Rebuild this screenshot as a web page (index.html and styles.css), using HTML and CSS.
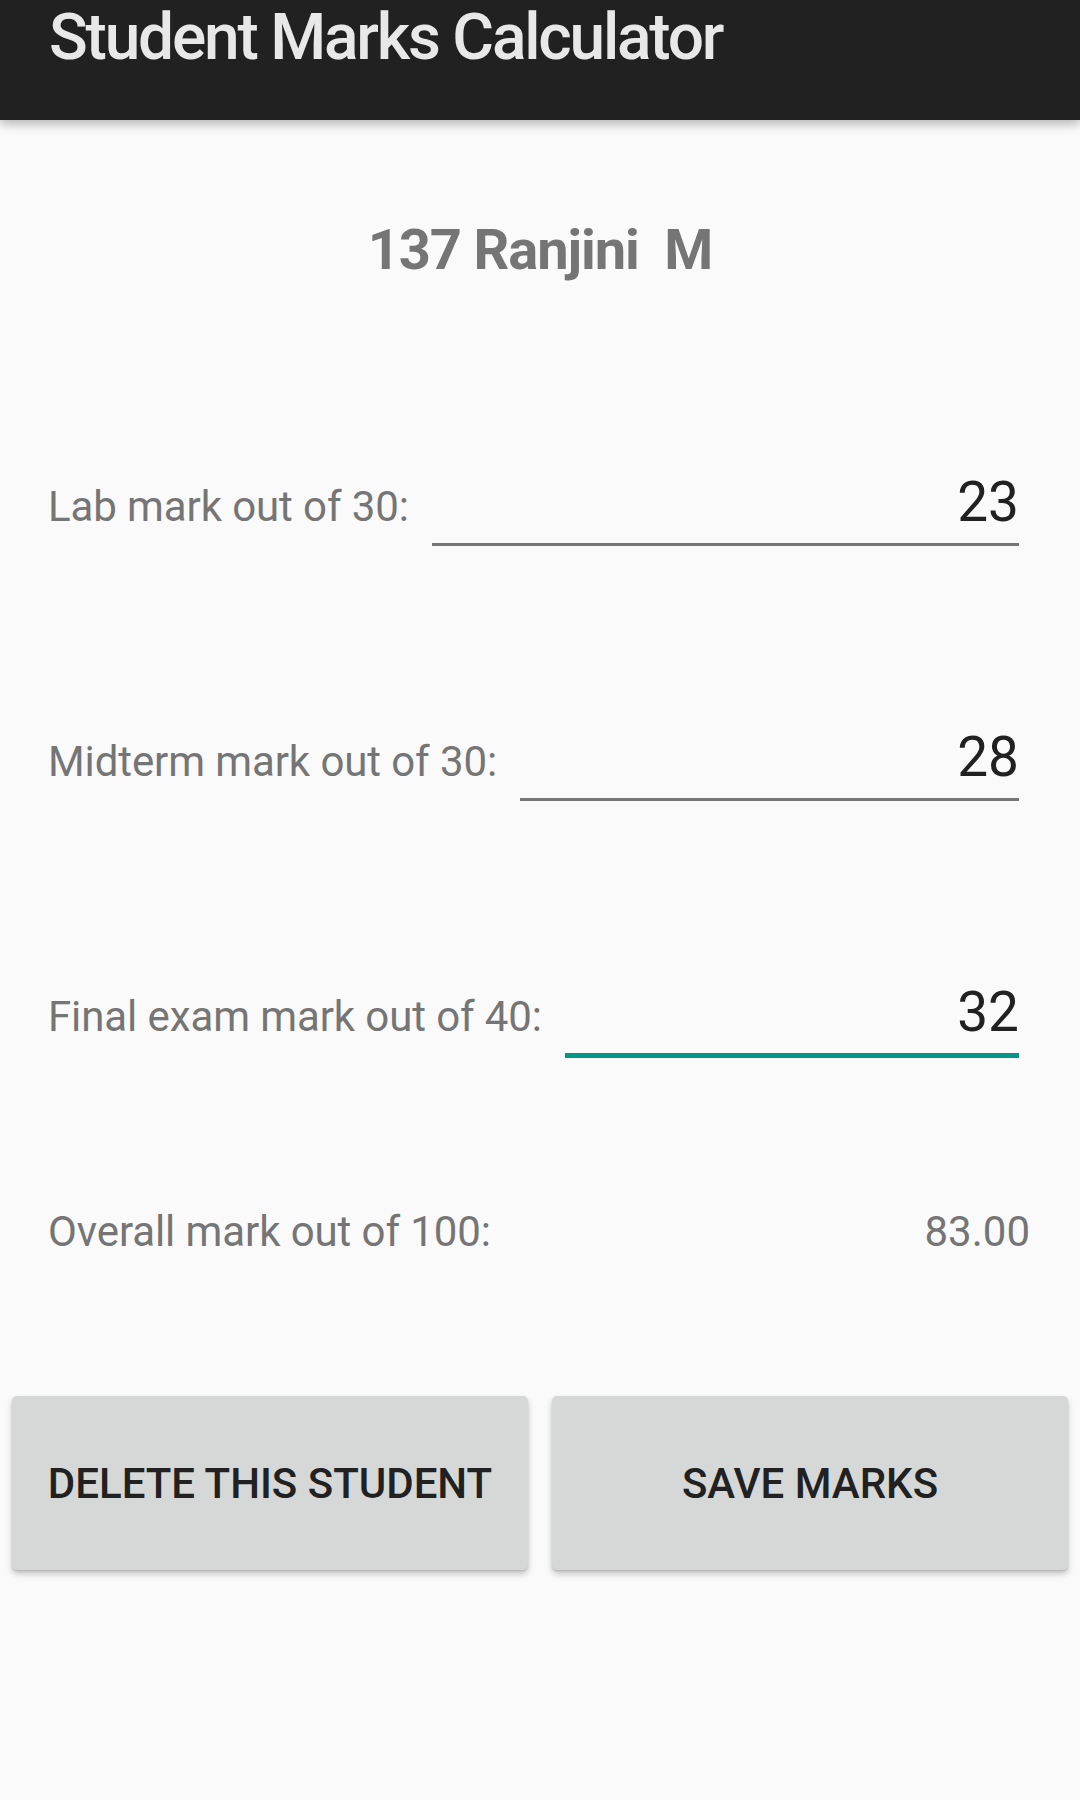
FILE: index.html
```html
<!DOCTYPE html>
<html>
<head>
<meta charset="utf-8">
<link rel="stylesheet" href="styles.css">
</head>
<body>
<header class="appbar">
  <h1 class="appbar-title">Student Marks Calculator</h1>
</header>
<main class="content">
  <div class="student-name">137 Ranjini&nbsp;&nbsp;M</div>

  <div class="mark-row row-lab">
    <span class="mark-label">Lab mark out of 30:</span>
    <div class="mark-field">23</div>
  </div>

  <div class="mark-row row-mid">
    <span class="mark-label">Midterm mark out of 30:</span>
    <div class="mark-field">28</div>
  </div>

  <div class="mark-row row-final">
    <span class="mark-label">Final exam mark out of 40:</span>
    <div class="mark-field focused">32</div>
  </div>

  <div class="overall-row">
    <span class="mark-label">Overall mark out of 100:</span>
    <span class="overall-value">83.00</span>
  </div>

  <div class="button-row">
    <button class="btn">Delete this student</button>
    <button class="btn">Save marks</button>
  </div>
</main>
</body>
</html>
```

FILE: styles.css
```css
* { box-sizing: border-box; }

html, body {
  margin: 0;
  padding: 0;
  background: #fafafa;
  font-family: "Roboto", "Liberation Sans", sans-serif;
}

body {
  width: 1080px;
  min-height: 1800px;
}

.appbar {
  height: 120px;
  background: #212121;
  box-shadow: 0 4px 10px rgba(0, 0, 0, 0.28);
  position: relative;
  z-index: 1;
}

.appbar-title {
  margin: 0;
  padding-left: 49px;
  font-size: 64px;
  line-height: 75px;
  font-weight: 500;
  letter-spacing: -2.2px;
  color: #e8e8e8;
}

.content {
  display: flex;
  flex-direction: column;
}

.student-name {
  margin-top: 97px;
  text-align: center;
  font-size: 56px;
  line-height: 66px;
  font-weight: 700;
  letter-spacing: -1.1px;
  color: #757575;
}

.mark-row {
  display: flex;
  align-items: baseline;
  padding: 0 61px 0 48px;
}

.row-lab { margin-top: 187px; }
.row-mid { margin-top: 179px; }
.row-final { margin-top: 179px; }

.mark-label {
  font-size: 42px;
  line-height: 50px;
  color: #757575;
  white-space: nowrap;
  letter-spacing: -0.1px;
}

.mark-field {
  flex: 1;
  margin-left: 23px;
  text-align: right;
  font-size: 55px;
  line-height: 64px;
  color: #212121;
  padding-bottom: 9px;
  border-bottom: 3px solid #757575;
}

.mark-field.focused {
  border-bottom: 5px solid #009688;
}

.overall-row {
  display: flex;
  justify-content: space-between;
  align-items: baseline;
  padding: 0 50px 0 48px;
  margin-top: 149px;
}

.overall-value {
  font-size: 42px;
  line-height: 50px;
  color: #757575;
}

.button-row {
  display: flex;
  gap: 24px;
  padding: 0 12px;
  margin-top: 139px;
}

.btn {
  flex: 1;
  height: 174px;
  border: none;
  border-radius: 5px;
  background: #d6d7d7;
  box-shadow: 0 4px 6px rgba(0, 0, 0, 0.22), 0 1px 2px rgba(0, 0, 0, 0.12);
  font-family: "Roboto", "Liberation Sans", sans-serif;
  font-size: 42px;
  font-weight: 500;
  text-transform: uppercase;
  color: #212121;
  padding: 0;
}
```
